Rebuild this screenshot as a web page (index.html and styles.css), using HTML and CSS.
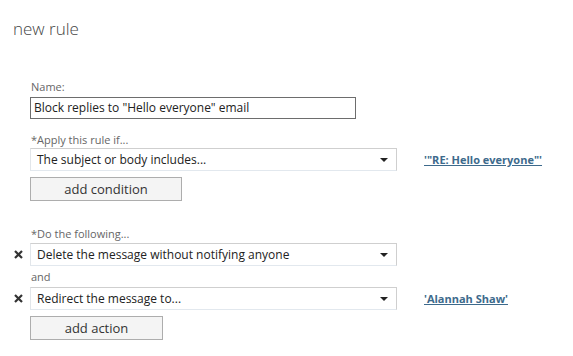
FILE: index.html
```html
<!DOCTYPE html>
<html lang="en">
<head>
    <meta charset="UTF-8">
    <title>new rule</title>
    <link rel="stylesheet" href="styles.css">
</head>
<body>
    <h1 class="title">new rule</h1>

    <div class="form">
        <div class="label">Name:</div>
        <div class="row">
            <div class="text-input">Block replies to "Hello everyone" email</div>
        </div>

        <div class="label gap-top">*Apply this rule if...</div>
        <div class="row">
            <div class="select">
                <span>The subject or body includes...</span>
                <span class="arrow"></span>
            </div>
            <a href="#" class="value-link">'"RE: Hello everyone"'</a>
        </div>
        <div class="btn">add condition</div>

        <div class="label section-top">*Do the following...</div>
        <div class="row">
            <span class="remove">
                <svg width="9" height="9" viewBox="0 0 9 9"><path d="M1 1 L8 8 M8 1 L1 8" stroke="#333" stroke-width="2.2"/></svg>
            </span>
            <div class="select">
                <span>Delete the message without notifying anyone</span>
                <span class="arrow"></span>
            </div>
        </div>
        <div class="label small-gap">and</div>
        <div class="row">
            <span class="remove">
                <svg width="9" height="9" viewBox="0 0 9 9"><path d="M1 1 L8 8 M8 1 L1 8" stroke="#333" stroke-width="2.2"/></svg>
            </span>
            <div class="select">
                <span>Redirect the message to...</span>
                <span class="arrow"></span>
            </div>
            <a href="#" class="value-link">'Alannah Shaw'</a>
        </div>
        <div class="btn btn-action">add action</div>
    </div>
</body>
</html>
```

FILE: styles.css
```css
* {
    margin: 0;
    padding: 0;
    box-sizing: border-box;
}

body {
    font-family: 'Open Sans', 'Noto Sans', sans-serif;
    background: #fff;
    color: #333;
    width: 573px;
    height: 356px;
    overflow: hidden;
}

.title {
    font-size: 17px;
    font-weight: 300;
    line-height: 24px;
    color: #444;
    padding: 17px 0 0 13px;
}

.form {
    padding: 39px 0 0 30px;
}

.label {
    font-size: 11px;
    line-height: 14px;
    color: #666;
    padding-left: 1px;
    margin-bottom: 3px;
}

.gap-top {
    margin-top: 14px;
    margin-bottom: 1px;
}

.section-top {
    margin-top: 26px;
    margin-bottom: 2px;
}

.small-gap {
    margin-top: 4px;
    margin-bottom: 3px;
}

.row {
    display: flex;
    align-items: center;
    position: relative;
}

.text-input {
    width: 326px;
    height: 22px;
    border: 1px solid #6d6d6d;
    font-size: 12px;
    line-height: 20px;
    padding-left: 3px;
    color: #222;
}

.select {
    width: 367px;
    height: 23px;
    border: 1px solid #cfcfcf;
    border-bottom-color: #e2e8ee;
    border-left-color: #e2e6ea;
    font-size: 12px;
    line-height: 21px;
    padding-left: 6px;
    padding-right: 8px;
    color: #222;
    display: flex;
    justify-content: space-between;
    align-items: center;
}

.arrow {
    width: 0;
    height: 0;
    border-left: 4px solid transparent;
    border-right: 4px solid transparent;
    border-top: 4px solid #222;
}

.remove {
    position: absolute;
    left: -16px;
    top: 7px;
    line-height: 0;
}

.value-link {
    margin-left: 27px;
    font-size: 11px;
    font-weight: bold;
    color: #3d6a8c;
    text-decoration: underline;
}

.btn {
    width: 152px;
    height: 24px;
    margin-top: 6px;
    background: #f4f4f4;
    border: 1px solid #adadad;
    font-size: 13px;
    line-height: 22px;
    text-align: center;
    color: #333;
}

.btn-action {
    width: 133px;
}
```
